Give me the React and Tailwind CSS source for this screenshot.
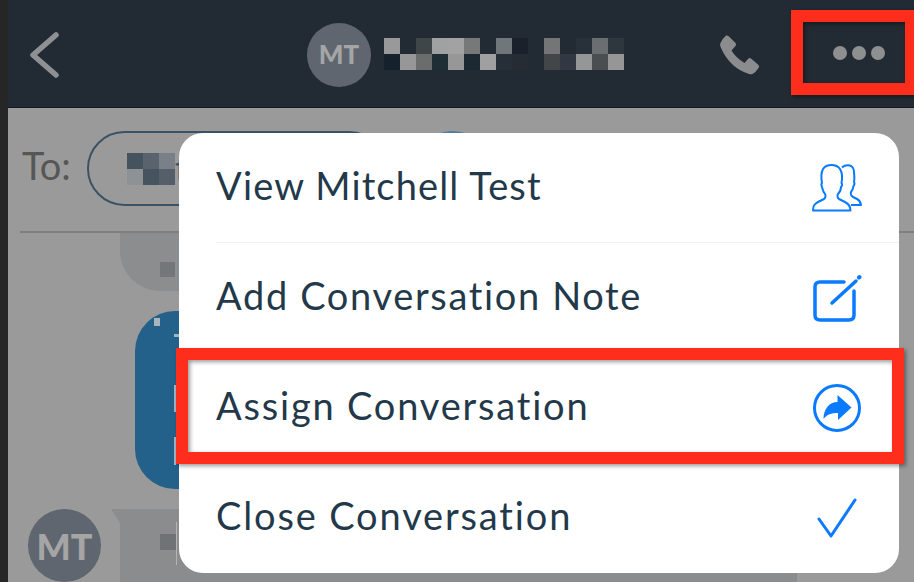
const nameCells = [
  'bg-[#999999]', '', 'bg-[#3f4648]', 'bg-[#a0a2a1]', 'bg-[#a2a2a2]', 'bg-[#767879]', '', 'bg-[#70777b]', 'bg-[#1a212a]', '', 'bg-[#747577]', '', 'bg-[#28313a]', 'bg-[#6b6e70]', 'bg-[#2e363e]',
  'bg-[#15222e]', 'bg-[#979797]', 'bg-[#6b6d6d]', 'bg-[#1f2d35]', 'bg-[#979797]', 'bg-[#1c2933]', 'bg-[#a0a0a0]', 'bg-[#262f37]', 'bg-[#252c33]', '', 'bg-[#424648]', 'bg-[#323843]', 'bg-[#959796]', 'bg-[#4a4e51]', 'bg-[#969696]',
];

const chipCells = ['bg-[#45535e]', 'bg-[#59636d]', 'bg-[#7a8087]', 'bg-[#8f9295]', 'bg-[#46545f]', 'bg-[#545f69]'];

const PeopleIcon = () => (
  <svg width="50" height="48" viewBox="0 0 50 48" fill="none" stroke="#0a7aff" strokeWidth="2" strokeLinejoin="round">
    <path d="M1 46.5H38.5C38.5 42 37 40 33 38L27 35C25.5 34 25 31 26 30C28 28 29 25 29 23C30 22 30.5 20 29.5 19C30.5 14 30.5 9 28 5C26 2 23 1 19.5 1C16 1 13 2 11 5C9 9 9 14 10 19C9 20 9.5 22 10 23C10.5 25 11 28 13 30C14 31 13.5 34 12 35L6 38C2 40 1 42 1 46.5Z" />
    <path d="M30 3.5C32 1.5 35 1 38 1.5C41.5 3 42 5 42 9C42.5 12 42.5 15 42 18C43 20 42.5 21 41.5 22C41 25 40 27 39 28C38.5 30 39 32 41 33L45 35C48 36.5 48.5 38 49 41H39" />
  </svg>
);

const EditIcon = () => (
  <svg width="50" height="48" viewBox="0 0 50 48" fill="none" stroke="#0a7aff" strokeLinecap="round">
    <path d="M32 8H8C4.5 8 3 9.5 3 13V41C3 44.5 4.5 46 8 46H37C40.5 46 42 44.5 42 41V17" strokeWidth="3.5" />
    <path d="M20 29L44 7" strokeWidth="3.5" />
    <path d="M47 3.5L47.5 3" strokeWidth="4" />
  </svg>
);

const AssignIcon = () => (
  <svg width="50" height="50" viewBox="0 0 50 50" fill="none">
    <circle cx="25" cy="25" r="22.5" stroke="#0a7aff" strokeWidth="3" />
    <path d="M25.5 12L39.5 24.5L26 37V30C19 30 15 31.5 11.5 36C11.5 26.5 17 19 25.5 19Z" fill="#0a7aff" />
  </svg>
);

const CheckIcon = () => (
  <svg width="42" height="42" viewBox="0 0 42 42" fill="none" stroke="#0a7aff" strokeWidth="3" strokeLinecap="round" strokeLinejoin="round">
    <path d="M3 22L15 39L39 3" />
  </svg>
);

const menuItems = [
  { label: 'View Mitchell Test', tracking: 'tracking-[1.15px]', icon: <PeopleIcon /> },
  { label: 'Add Conversation Note', tracking: 'tracking-[1.65px]', icon: <EditIcon /> },
  { label: 'Assign Conversation', tracking: 'tracking-[1.8px]', icon: <AssignIcon /> },
  { label: 'Close Conversation', tracking: 'tracking-[1.85px]', icon: <CheckIcon /> },
];

const App = () => {
  return (
    <div className="flex h-[582px] w-[914px] overflow-hidden bg-[#262626] [font-family:Lato,sans-serif]">
      <div className="w-[8px] shrink-0" />

      <div className="relative flex min-w-0 flex-1 flex-col overflow-hidden bg-[#9a9a9a]">
        <header className="flex h-[108px] shrink-0 items-center border-b border-[#141b20] bg-[#222b33] pl-[20px]">
          <svg width="34" height="50" viewBox="0 0 34 50" fill="none" stroke="#8e9093" strokeWidth="5.5" strokeLinecap="round" strokeLinejoin="round" className="mt-[2px]">
            <path d="M28 5L5 25L28 45" />
          </svg>
          <div className="ml-[245px] mt-[2px] flex h-[64px] w-[64px] items-center justify-center rounded-full bg-[#5f6670] text-[26px] font-black text-[#a5a5a5]">
            MT
          </div>
          <div className="ml-[13px] grid grid-cols-[repeat(15,16px)] grid-rows-[16px_16px]">
            {nameCells.map((cell, i) => (
              <div key={i} className={cell} />
            ))}
          </div>
          <svg width="40" height="40" viewBox="0 0 40 40" fill="#8a8c8e" className="ml-[96px] mt-[2px]">
            <path d="M6 .5Q7.5 0 9 1.5L15.5 8Q16.5 9.5 15.5 11L11.5 15.5Q16 23 24.5 28L28 24Q29.5 22.5 31 23.5L38.5 30Q39.5 31.5 38.5 33Q36 37 32.5 39Q31 39.5 29 39Q10 33 1 13Q-.5 10 .5 8Q2.5 3.5 6 .5Z" />
          </svg>
          <div className="mb-[1px] ml-[73px] flex gap-[5px]">
            <div className="h-[14px] w-[14px] rounded-full bg-[#8e8f91]" />
            <div className="h-[14px] w-[14px] rounded-full bg-[#8e8f91]" />
            <div className="h-[14px] w-[14px] rounded-full bg-[#8e8f91]" />
          </div>
        </header>

        <div className="ml-[12px] flex h-[125px] shrink-0 items-center border-b-2 border-[#7f7f7f] pb-[2px]">
          <span className="mb-[6px] ml-[2px] text-[38px] text-[#565656]">To:</span>
          <div className="ml-[16px] flex h-[75px] w-[300px] items-center rounded-full border-2 border-[#3b5264] pl-[38px]">
            <div className="grid grid-cols-[repeat(3,16px)] grid-rows-[16px_16px]">
              {chipCells.map((cell, i) => (
                <div key={i} className={cell} />
              ))}
            </div>
            <span className="text-[38px] text-[#3b5264]">t</span>
          </div>
          <div className="ml-[28px] h-[75px] w-[75px] rounded-full border-2 border-[#4e7da0]" />
        </div>

        <div className="flex min-h-0 flex-1 flex-col">
          <div className="relative ml-[112px] h-[58px] w-[400px] shrink-0 rounded-bl-[40px] bg-[#8b8d8f]">
            <div className="absolute left-[40px] top-[29px] h-[15px] w-[15px] bg-[#73777a]" />
          </div>

          <div className="relative ml-[127px] mt-[20px] h-[178px] w-[400px] shrink-0 rounded-[40px] bg-[#24618a]">
            <div className="absolute left-[19px] top-[7px] h-[8px] w-[6px] bg-[#a9b4bb]" />
            <div className="absolute left-[39px] top-[23px] h-[3px] w-[5px] bg-[#9db6c6]" />
            <div className="absolute left-[39px] top-[74px] h-[27px] w-[3px] bg-[#9db6c6]" />
            <div className="absolute left-[39px] top-[126px] h-[6px] w-[5px] bg-[#9db6c6]" />
            <div className="absolute left-[39px] top-[132px] h-[22px] w-[2px] bg-[#9db6c6]" />
          </div>

          <div className="ml-[20px] mt-[20px] flex shrink-0">
            <div className="flex h-[73px] w-[73px] items-center justify-center rounded-full bg-[#5f6670] text-[36px] font-black text-[#a5a5a5]">
              MT
            </div>
            <div className="relative ml-[10px] h-[73px] w-[686px] bg-[#8b8c8e] [clip-path:polygon(0_0,100%_0,100%_100%,9px_100%,9px_14px)]">
              <div className="absolute left-[49px] top-[25px] h-[16px] w-[16px] bg-[#6f7375]" />
              <div className="absolute left-[65px] top-[13px] h-[43px] w-[1px] bg-[#b5b5b5]" />
            </div>
          </div>
        </div>

        <div className="absolute left-[171px] top-[133px] w-[720px] overflow-hidden rounded-[24px] bg-white">
          {menuItems.map((item, i) => (
            <div key={item.label} className="relative flex h-[110px] items-center pl-[37px] text-[38px] text-[#23394a]">
              <span className={`mb-[6px] flex-1 ${item.tracking}`}>{item.label}</span>
              <div className="mr-[37px] flex w-[50px] justify-center">{item.icon}</div>
              {i === 0 && <div className="absolute bottom-0 left-[37px] right-0 h-px bg-[#eff0f5]" />}
            </div>
          ))}
        </div>

        <div className="absolute left-[783px] top-[10px] h-[85px] w-[126px] border-[12px] border-[#ff2d1c] shadow-[2px_2px_4px_rgba(0,0,0,0.4),inset_2px_2px_4px_rgba(0,0,0,0.4)]" />
        <div className="absolute left-[168px] top-[348px] h-[116px] w-[728px] border-[12px] border-[#ff2d1c] shadow-[2px_2px_4px_rgba(0,0,0,0.4),inset_2px_2px_4px_rgba(0,0,0,0.4)]" />
      </div>
    </div>
  );
};

export default App;
